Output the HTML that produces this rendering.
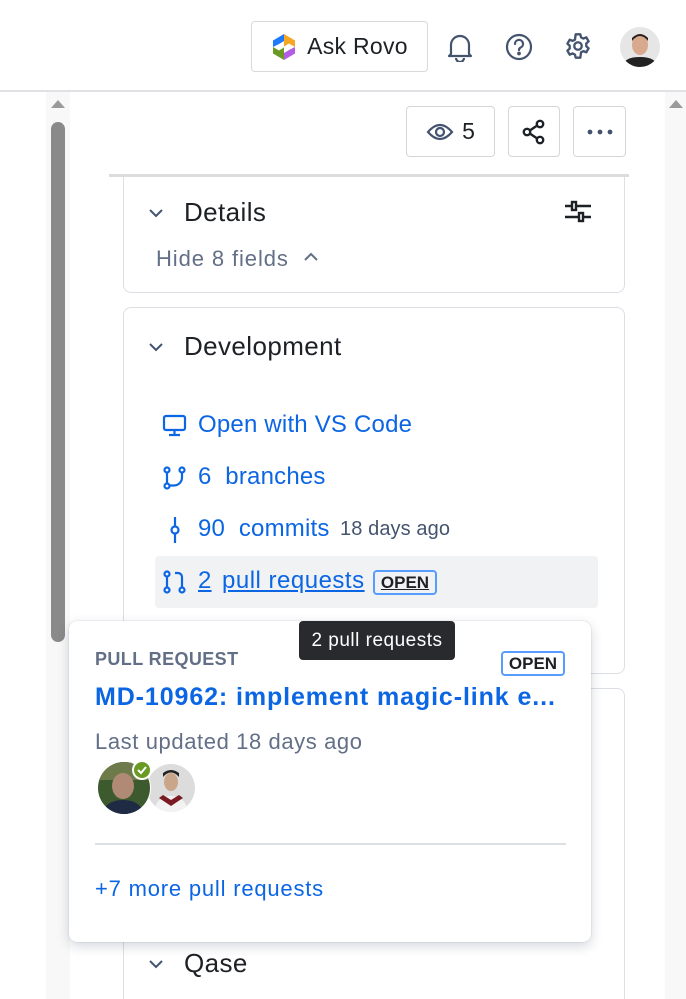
<!DOCTYPE html>
<html style="width:686px;height:999px;overflow:hidden"><head><meta charset="utf-8"><style>
*{box-sizing:border-box;margin:0;padding:0}
body{width:686px;height:999px;overflow:hidden;background:#fff;font-family:"Liberation Sans",sans-serif;color:#172b4d;position:relative}
.abs{position:absolute;white-space:nowrap}
.btn{position:absolute;border:1px solid #d4d6da;border-radius:4px;background:#fff;display:flex;align-items:center;justify-content:center}
.card{position:absolute;border:1px solid #dcdfe4;border-radius:8px;background:#fff}
.h{font-size:26px;color:#1d2125;letter-spacing:.4px}
.link{color:#0c66e4;font-size:24px;letter-spacing:.2px}
.chev{position:absolute}
</style></head><body>
<div class="abs" style="left:0;top:90px;width:686px;height:2px;background:#dfe1e4"></div>
<div class="btn" style="left:251px;top:21px;width:177px;height:51px;border-color:#d8d9dc">
 <svg width="26" height="28" viewBox="0 0 26 28" style="margin-right:10px">
  <path d="M13 1 L24 7.5 L24 14 L18 10.5 L13 13.5Z" fill="#f5a623"/>
  <path d="M24 14 L24 20.5 L13 27 L13 20 L18 17Z" fill="#b35ce6"/>
  <path d="M13 27 L2 20.5 L2 14 L8 17.5 L13 14.5Z" fill="#6a9a23"/>
  <path d="M2 14 L2 7.5 L13 1 L13 8 L8 11Z" fill="#1d7afc"/>
 </svg>
 <span style="font-size:23px;color:#1d2125;letter-spacing:.3px">Ask Rovo</span>
</div>
<svg class="abs" style="left:446px;top:32px" width="28" height="30" viewBox="0 0 28 30" fill="none" stroke="#44546f" stroke-width="2.2" stroke-linejoin="round"><path d="M5 22 V13 a9 9 0 0 1 18 0 V22 l2 2 H3z"/><path d="M10 26 a4 4 0 0 0 8 0"/></svg>
<svg class="abs" style="left:505px;top:33px" width="28" height="28" viewBox="0 0 28 28" fill="none" stroke="#44546f" stroke-width="2.2"><circle cx="14" cy="14" r="12"/><path d="M10 11 a4 4 0 1 1 5.5 3.6 c-1 .5 -1.5 1 -1.5 2.4" stroke-linecap="round"/><circle cx="14" cy="20.5" r=".8" fill="#44546f"/></svg>
<svg class="abs" style="left:564px;top:32px" width="28" height="28" viewBox="0 0 24 24" fill="none" stroke="#44546f" stroke-width="2"><path d="M10 2h4l.6 2.6 2 1 2.5-1 2 3.4-2 1.8v2.4l2 1.8-2 3.4-2.5-1-2 1L14 22h-4l-.6-2.6-2-1-2.5 1-2-3.4 2-1.8v-2.4l-2-1.8 2-3.4 2.5 1 2-1z" stroke-linejoin="round"/><circle cx="12" cy="12" r="3.2"/></svg>
<svg class="abs" style="left:620px;top:27px" width="40" height="40" viewBox="0 0 40 40"><defs><clipPath id="c1"><circle cx="20" cy="20" r="20"/></clipPath></defs><g clip-path="url(#c1)"><rect width="40" height="40" fill="#e6e6e6"/><ellipse cx="20" cy="18" rx="8" ry="10" fill="#d9a98e"/><path d="M12 14 q8 -10 16 0 v-3 q-8 -8 -16 0z" fill="#2b2220"/><path d="M2 40 q2 -10 18 -10 q16 0 18 10z" fill="#222"/></g></svg>

<div class="abs" style="left:46px;top:92px;width:24px;height:907px;background:#f8f8f8"></div>
<div class="abs" style="left:51px;top:100px;width:0;height:0;border-left:7px solid transparent;border-right:7px solid transparent;border-bottom:8px solid #9a9a9a"></div>
<div class="abs" style="left:51px;top:122px;width:14px;height:520px;border-radius:7px;background:#8a8a8a"></div>
<div class="abs" style="left:665px;top:92px;width:21px;height:907px;background:#f8f8f8"></div>
<div class="abs" style="left:669px;top:100px;width:0;height:0;border-left:7px solid transparent;border-right:7px solid transparent;border-bottom:8px solid #9a9a9a"></div>

<div class="btn" style="left:406px;top:106px;width:89px;height:51px">
 <svg width="28" height="20" viewBox="0 0 28 20" fill="none" stroke="#44546f" stroke-width="2.2" style="margin-right:8px"><path d="M2 10 Q14 -4 26 10 Q14 24 2 10Z"/><circle cx="14" cy="10" r="4"/></svg>
 <span style="font-size:23px;color:#1d2125">5</span></div>
<div class="btn" style="left:508px;top:106px;width:52px;height:51px">
 <svg width="26" height="26" viewBox="0 0 26 26" fill="none" stroke="#1d2125" stroke-width="2.4"><circle cx="19" cy="5" r="3.2"/><circle cx="6" cy="13" r="3.2"/><circle cx="19" cy="21" r="3.2"/><path d="M8.8 11.5 L16.2 6.5 M8.8 14.5 L16.2 19.5"/></svg></div>
<div class="btn" style="left:573px;top:106px;width:53px;height:51px">
 <svg width="28" height="6" viewBox="0 0 28 6" fill="#44546f"><circle cx="4" cy="3" r="2.4"/><circle cx="14" cy="3" r="2.4"/><circle cx="24" cy="3" r="2.4"/></svg></div>

<div class="card" style="left:123px;top:160px;width:502px;height:133px"></div>
<div class="abs" style="left:109px;top:160px;width:520px;height:15px;background:#fff"></div>
<div class="abs" style="left:109px;top:174px;width:520px;height:3px;background:#dcdcdc"></div>
<svg class="chev" style="left:148px;top:208px" width="16" height="10" viewBox="0 0 16 10" fill="none" stroke="#44546f" stroke-width="2"><path d="M2 2l6 6 6-6"/></svg>
<div class="abs h" style="left:184px;top:197px">Details</div>
<svg class="abs" style="left:564px;top:200px" width="28" height="24" viewBox="0 0 28 24" fill="none" stroke="#1d2125" stroke-width="2.4"><path d="M1 6h6M13 6h14M1 17h13M20 17h7"/><rect x="8" y="2" width="4" height="8"/><rect x="15" y="13" width="4" height="8"/></svg>
<div class="abs" style="left:156px;top:246px;font-size:22px;color:#626f86;letter-spacing:.9px">Hide 8 fields</div>
<svg class="abs" style="left:303px;top:252px" width="16" height="10" viewBox="0 0 16 10" fill="none" stroke="#626f86" stroke-width="2"><path d="M2 8l6-6 6 6"/></svg>

<div class="card" style="left:123px;top:307px;width:502px;height:367px"></div>
<svg class="chev" style="left:148px;top:342px" width="16" height="10" viewBox="0 0 16 10" fill="none" stroke="#44546f" stroke-width="2"><path d="M2 2l6 6 6-6"/></svg>
<div class="abs h" style="left:184px;top:331px">Development</div>

<svg class="abs" style="left:162px;top:414px" width="26" height="24" viewBox="0 0 26 24" fill="none" stroke="#0c66e4" stroke-width="2.2"><rect x="2" y="2" width="21" height="14" rx="2"/><path d="M12.5 16v5M7 21h11"/></svg>
<div class="abs link" style="left:198px;top:411px">Open with VS Code</div>

<svg class="abs" style="left:162px;top:466px" width="26" height="24" viewBox="0 0 26 24" fill="none" stroke="#0c66e4" stroke-width="2.2"><circle cx="5" cy="4" r="2.5"/><circle cx="5" cy="20" r="2.5"/><circle cx="20" cy="4" r="2.5"/><path d="M5 6.5v11M20 6.5v5a8 8 0 0 1 -8 8H7.5"/></svg>
<div class="abs link" style="left:198px;top:463px">6&nbsp; branches</div>

<svg class="abs" style="left:168px;top:516px" width="14" height="28" viewBox="0 0 14 28" fill="none" stroke="#0c66e4" stroke-width="2.2"><circle cx="7" cy="14" r="3.5"/><path d="M7 1v9.5M7 17.5V27"/></svg>
<div class="abs link" style="left:198px;top:515px">90&nbsp; commits</div>
<div class="abs" style="left:340px;top:518px;font-size:20px;color:#44546f;letter-spacing:.1px">18 days ago</div>

<div class="abs" style="left:155px;top:556px;width:443px;height:52px;background:#f1f2f4;border-radius:4px"></div>
<svg class="abs" style="left:162px;top:570px" width="26" height="24" viewBox="0 0 26 24" fill="none" stroke="#0c66e4" stroke-width="2.2"><circle cx="5" cy="4" r="2.5"/><circle cx="5" cy="20" r="2.5"/><circle cx="20" cy="20" r="2.5"/><path d="M5 6.5v11M20 17.5V7a4 4 0 0 0 -4 -4h-3"/></svg>
<div class="abs link" style="left:198px;top:567px;text-decoration:underline">2</div>
<div class="abs link" style="left:222px;top:567px;text-decoration:underline;letter-spacing:.5px">pull requests</div>
<div class="abs" style="left:373px;top:570px;width:64px;height:25px;border:2px solid #579dff;border-radius:4px;font-size:17px;font-weight:bold;color:#1d2125;text-align:center;line-height:21px;text-decoration:underline">OPEN</div>

<div class="card" style="left:123px;top:688px;width:502px;height:340px"></div>

<div class="abs" style="left:69px;top:621px;width:522px;height:321px;background:#fff;border-radius:8px;box-shadow:0 4px 12px rgba(9,30,66,.18),0 0 1px rgba(9,30,66,.3)"></div>
<div class="abs" style="left:95px;top:649px;font-size:18px;font-weight:bold;color:#626f86;letter-spacing:.4px">PULL REQUEST</div>
<div class="abs" style="left:501px;top:651px;width:64px;height:25px;border:2px solid #579dff;border-radius:4px;font-size:17px;font-weight:bold;color:#1d2125;text-align:center;line-height:21px">OPEN</div>
<div class="abs" style="left:95px;top:683px;font-size:25px;font-weight:bold;color:#0c66e4;letter-spacing:.9px">MD-10962: implement magic-link e...</div>
<div class="abs" style="left:95px;top:729px;font-size:22px;color:#626f86;letter-spacing:.6px">Last updated 18 days ago</div>
<svg class="abs" style="left:97px;top:760px" width="102" height="56" viewBox="0 0 102 56">
 <defs><clipPath id="a1"><circle cx="27" cy="28" r="26"/></clipPath><clipPath id="a2"><circle cx="74" cy="28" r="24"/></clipPath></defs>
 <g clip-path="url(#a2)"><rect x="48" y="0" width="54" height="56" fill="#dcdcdc"/><ellipse cx="74" cy="22" rx="7" ry="9" fill="#c9a58a"/><path d="M66 17q8-9 16 0v-4q-8-6-16 0z" fill="#222"/><path d="M56 56q2-20 18-20q16 0 18 20z" fill="#f2f2f2"/><path d="M62 38 l12 8 12 -8 -4 -3 -8 5 -8 -5z" fill="#7a1a22"/></g>
 <circle cx="27" cy="28" r="27" fill="#fff"/>
 <g clip-path="url(#a1)"><rect width="54" height="56" fill="#3c5a2e"/><rect x="0" y="0" width="54" height="20" fill="#6d7a4a"/><ellipse cx="26" cy="26" rx="11" ry="13" fill="#b08a74"/><path d="M4 56q4-16 22-16q18 0 22 16z" fill="#1f2a44"/></g>
 <circle cx="45" cy="10" r="10" fill="#fff"/><circle cx="45" cy="10" r="8" fill="#6a9a23"/><path d="M41 10l3 3 5-6" fill="none" stroke="#fff" stroke-width="2"/>
</svg>
<div class="abs" style="left:95px;top:843px;width:471px;height:2px;background:#dcdfe4"></div>
<div class="abs" style="left:95px;top:876px;font-size:22px;color:#0c66e4;letter-spacing:.8px">+7 more pull requests</div>

<div class="abs" style="left:299px;top:621px;width:156px;height:39px;background:#292a2e;border-radius:4px;color:#fff;font-size:19px;text-align:center;line-height:39px;letter-spacing:.5px">2 pull requests</div>

<svg class="chev" style="left:148px;top:959px" width="16" height="10" viewBox="0 0 16 10" fill="none" stroke="#44546f" stroke-width="2"><path d="M2 2l6 6 6-6"/></svg>
<div class="abs h" style="left:184px;top:948px">Qase</div>
</body></html>
